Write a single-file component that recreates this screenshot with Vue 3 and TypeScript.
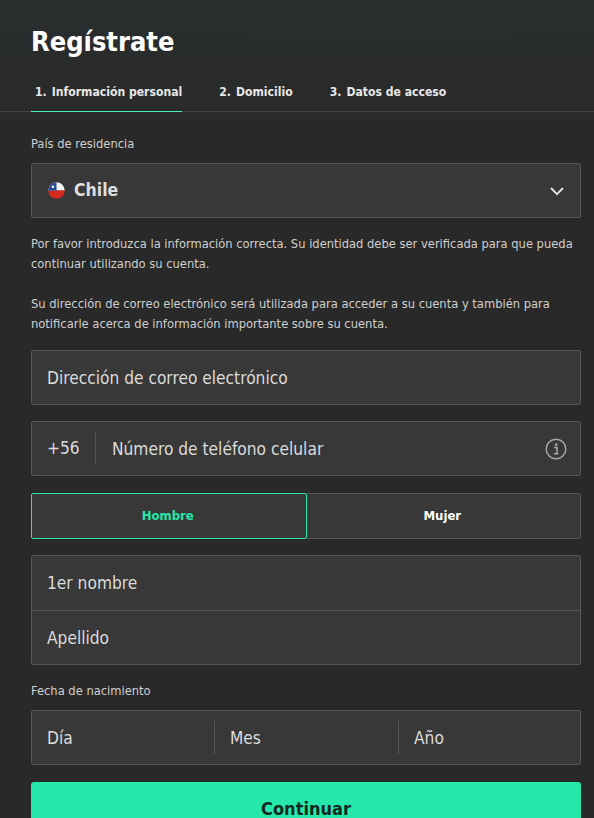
<script setup lang="ts">
const tabs = [
  { n: '1.', label: 'Información personal', active: true },
  { n: '2.', label: 'Domicilio', active: false },
  { n: '3.', label: 'Datos de acceso', active: false },
]
</script>

<template>
  <div class="page">
    <h1 class="title">Regístrate</h1>
    <nav class="tabs">
      <div v-for="t in tabs" :key="t.n" class="tab" :class="{ active: t.active }">
        <span class="num">{{ t.n }}</span><span>{{ t.label }}</span>
      </div>
    </nav>
    <main class="form">
      <div class="label first">País de residencia</div>
      <div class="box select">
        <svg class="flag" width="17" height="17" viewBox="0 0 16 16">
          <defs><clipPath id="fc"><circle cx="8" cy="8" r="7.8" /></clipPath></defs>
          <g clip-path="url(#fc)">
            <rect width="16" height="8" fill="#f4f4f4" />
            <rect y="8" width="16" height="8" fill="#d52b1e" />
            <rect width="8" height="8" fill="#2b4a9c" />
            <circle cx="4.6" cy="4.4" r="1.2" fill="#fff" />
          </g>
        </svg>
        <span class="country">Chile</span>
        <svg class="chev" width="16" height="16" viewBox="0 0 16 16" fill="none">
          <path d="M2 5 8 11.2 14 5" stroke="#e4e4e4" stroke-width="1.8" />
        </svg>
      </div>
      <p class="info">Por favor introduzca la información correcta. Su identidad debe ser verificada para que pueda continuar utilizando su cuenta.</p>
      <p class="info second">Su dirección de correo electrónico será utilizada para acceder a su cuenta y también para notificarle acerca de información importante sobre su cuenta.</p>
      <div class="box field email">Dirección de correo electrónico</div>
      <div class="box field phone">
        <span class="prefix">+56</span>
        <span class="phone-label">Número de teléfono celular</span>
        <svg class="info-icon" width="22" height="22" viewBox="0 0 22 22" fill="none">
          <circle cx="11" cy="11" r="9.8" stroke="#a8a8a8" stroke-width="1.4" />
          <circle cx="11.2" cy="6.6" r="1.3" fill="#a8a8a8" />
          <path d="M9 9.6h3v6M8.8 15.8h4.6" stroke="#a8a8a8" stroke-width="1.5" />
        </svg>
      </div>
      <div class="gender">
        <div class="g-opt selected">Hombre</div>
        <div class="g-opt">Mujer</div>
      </div>
      <div class="box names">
        <div class="name-row">1er nombre</div>
        <div class="name-row">Apellido</div>
      </div>
      <div class="label dob">Fecha de nacimiento</div>
      <div class="box date">
        <div class="d-cell">Día</div>
        <div class="d-cell">Mes</div>
        <div class="d-cell">Año</div>
      </div>
      <button class="cta" type="button"><span class="cta-text">Continuar</span></button>
    </main>
  </div>
</template>

<style>
html, body { margin: 0; background: #292929; }
</style>

<style scoped>
.page {
  width: 594px;
  height: 818px;
  overflow: hidden;
  box-sizing: border-box;
  font-family: "DejaVu Sans Condensed", "DejaVu Sans", sans-serif;
  color: #dcdcdc;
  background: linear-gradient(180deg, #2a2e2e 0, #292929 130px);
}
.title {
  margin: 0;
  padding: 24px 31px 0;
  font-size: 27px;
  line-height: 36px;
  font-weight: 700;
  color: #fff;
}
.tabs {
  display: flex;
  gap: 33px;
  margin-top: 10px;
  padding: 0 31px;
  height: 41px;
  border-bottom: 1px solid #434343;
}
.tab {
  display: flex;
  gap: 5px;
  box-sizing: border-box;
  height: 42px;
  padding: 13px 0 0 4px;
  font-size: 12.1px;
  line-height: 18px;
  font-weight: 700;
  color: #e8e8e8;
}
.tab.active { border-bottom: 1px solid #4df0b6; }
.form { padding: 0 13px 0 31px; }
.label { font-size: 12.8px; line-height: 18px; color: #cfcfcf; }
.first { margin-top: 23px; }
.box {
  box-sizing: border-box;
  background: #383838;
  border: 1px solid #555;
  border-radius: 2px;
}
.select {
  display: flex;
  align-items: center;
  height: 55px;
  margin-top: 10px;
  padding: 0 15px 0 16px;
}
.flag { flex: none; }
.country { margin-left: 9px; font-size: 17.5px; font-weight: 700; color: #dedede; position: relative; top: -1px; }
.chev { margin-left: auto; }
.info { margin: 16px 0 0; font-size: 12.8px; line-height: 20px; color: #cfcfcf; }
.info.second { margin-top: 20px; }
.field { display: flex; align-items: center; height: 55px; font-size: 17.2px; padding: 0 15px; color: #dcdcdc; }
.email { margin-top: 16px; }
.phone { margin-top: 16px; padding-right: 13px; }
.prefix { flex: none; width: 48px; height: 33px; line-height: 33px; border-right: 1px solid #555; }
.phone-label { margin-left: 16px; }
.info-icon { margin-left: auto; }
.gender { display: flex; margin-top: 17px; height: 46px; }
.g-opt {
  flex: 1;
  display: flex;
  align-items: center;
  justify-content: center;
  box-sizing: border-box;
  padding: 0 2px 2px 0;
  background: #383838;
  border: 1px solid #555;
  border-left: none;
  border-radius: 0 2px 2px 0;
  font-size: 13px;
  font-weight: 700;
  color: #fff;
}
.g-opt.selected {
  border: 1px solid #25e8aa;
  border-radius: 2px;
  color: #25e8aa;
}
.names { margin-top: 16px; height: 110px; }
.name-row {
  box-sizing: border-box;
  height: 54px;
  padding: 0 15px;
  display: flex;
  align-items: center;
  font-size: 17.2px;
}
.name-row + .name-row { height: 54px; border-top: 1px solid #555; }
.dob { margin-top: 17px; }
.date { display: flex; align-items: center; height: 55px; margin-top: 10px; }
.d-cell {
  flex: 1;
  box-sizing: border-box;
  height: 33px;
  line-height: 35px;
  padding-left: 15px;
  font-size: 17.2px;
}
.d-cell + .d-cell { border-left: 1px solid #555; }
.d-cell:first-child { flex: 0 0 182px; }
.d-cell:last-child { padding-left: 15px; flex: 0 0 182px; }
.cta {
  display: block;
  width: 100%;
  height: 56px;
  margin-top: 17px;
  padding: 0 0 3px;
  border: none;
  border-radius: 3px;
  background: #25e8aa;
  color: #0f2a22;
  font-family: inherit;
  font-size: 18px;
  font-weight: 700;
}
.cta-text { display: inline-block; line-height: 22px; }
</style>
